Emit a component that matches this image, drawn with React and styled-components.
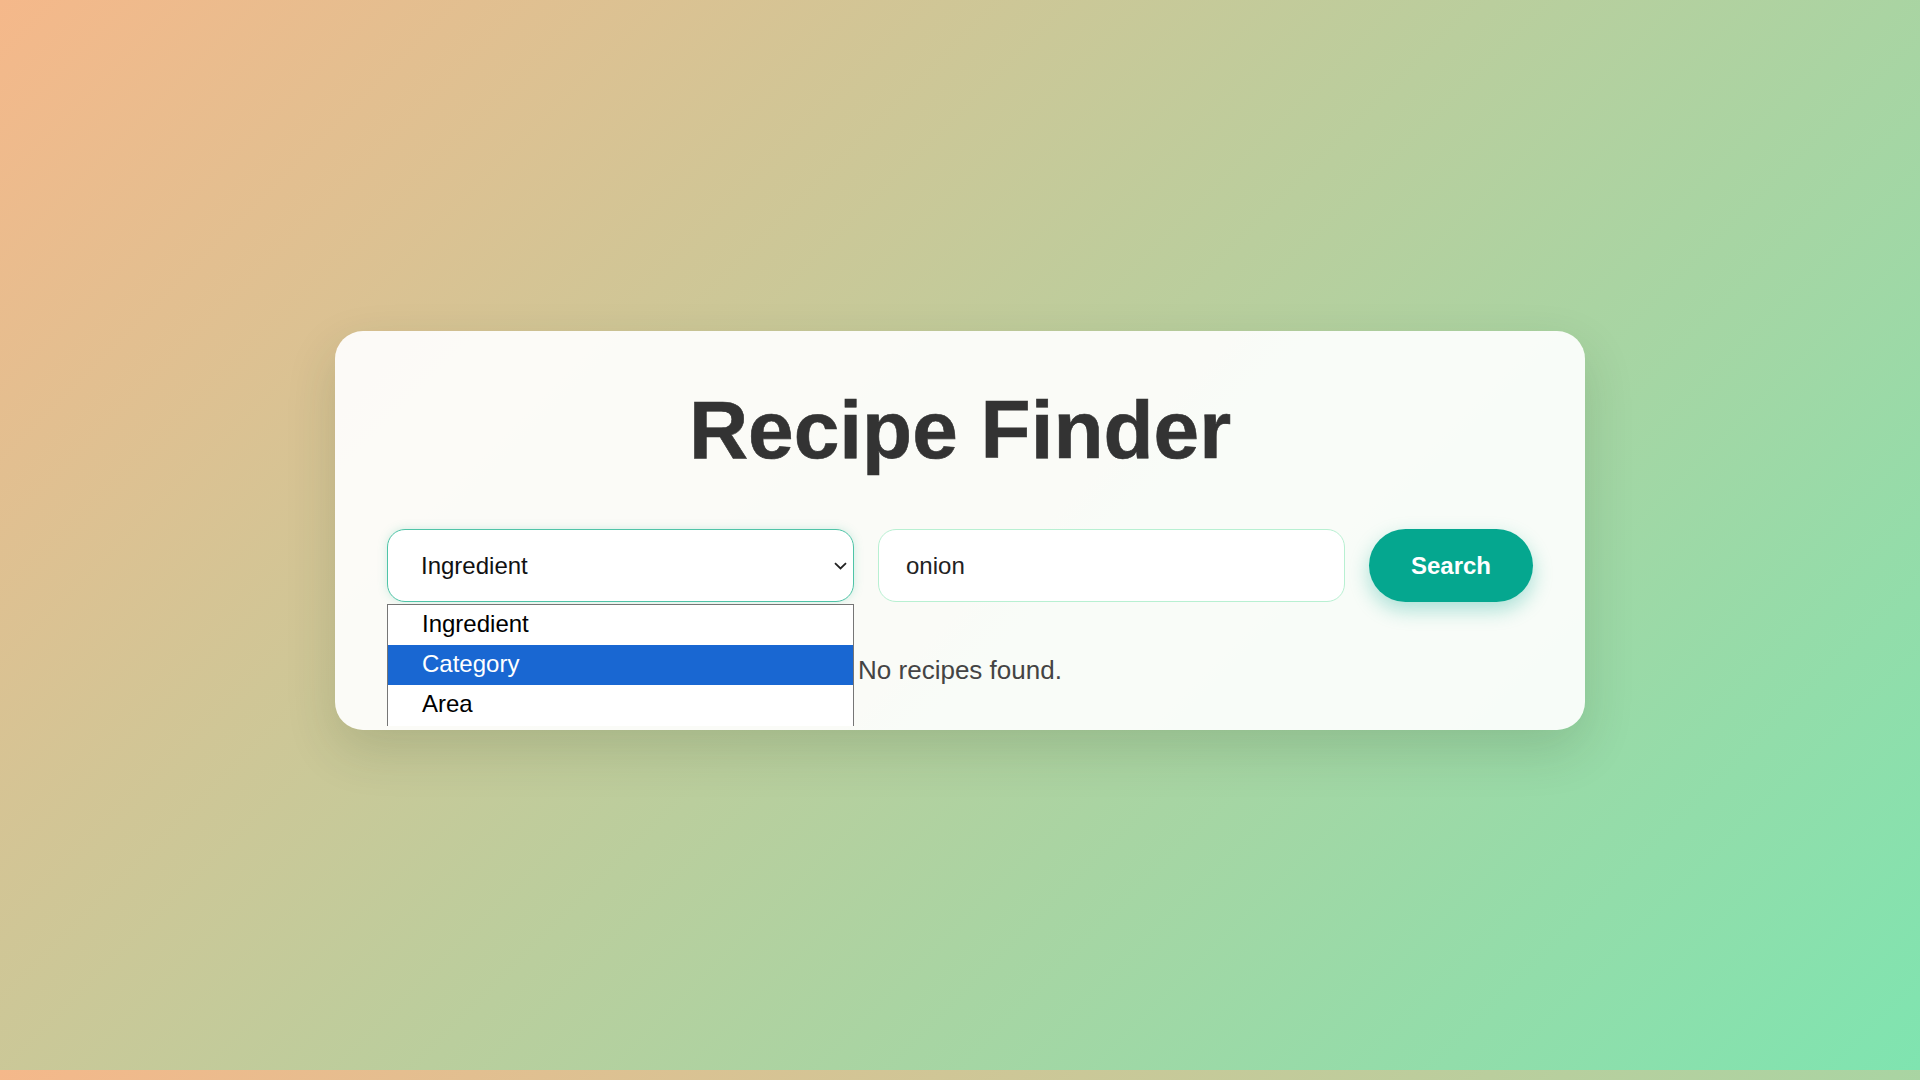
import React, { useState } from 'react';
import styled, { createGlobalStyle } from 'styled-components';

const GlobalStyle = createGlobalStyle`
  html {
    background: linear-gradient(135deg, #f5b88a 0%, #7fe4b0 100%);
    background-size: 100% 1070px;
    background-repeat: repeat-y;
    min-height: 100%;
  }
  body {
    margin: 0;
    font-family: "Liberation Sans", Arial, sans-serif;
  }
`;

const Page = styled.div`
  box-sizing: border-box;
  height: 1080px;
  padding-top: 331px;
  display: flex;
  justify-content: center;
  align-items: flex-start;
`;

const Card = styled.div`
  box-sizing: border-box;
  width: 1250px;
  padding: 52px 52px 44px;
  border-radius: 28px;
  background: rgba(255, 255, 255, 0.92);
  box-shadow: 0 20px 50px rgba(40, 60, 30, 0.16);
`;

const Title = styled.h1`
  margin: 0 0 52px;
  font-size: 82px;
  font-weight: 700;
  line-height: normal;
  color: #333;
  text-align: center;
  -webkit-text-stroke: 0.6px #333;
`;

const SearchRow = styled.div`
  display: grid;
  grid-template-columns: minmax(0, 1fr) minmax(0, 1fr) 164px;
  gap: 24px;
  height: 73px;
`;

const SelectWrap = styled.div`
  position: relative;
  min-width: 0;
`;

const Select = styled.select`
  box-sizing: border-box;
  width: 100%;
  height: 100%;
  appearance: none;
  border: 1.5px solid #4fc4a7;
  border-radius: 18px;
  background: #fff;
  padding: 0 40px 0 33px;
  font-family: inherit;
  font-size: 24px;
  color: #111;
  outline: none;
  box-shadow: 0 0 10px rgba(79, 196, 167, 0.25);
`;

const Chevron = styled.svg`
  position: absolute;
  right: 7px;
  top: 50%;
  margin-top: -4px;
  pointer-events: none;
`;

const OptionList = styled.ul`
  position: absolute;
  top: 75px;
  left: 0;
  right: 0;
  margin: 0;
  padding: 0;
  list-style: none;
  height: 121px;
  overflow: hidden;
  background: #fff;
  border: 1px solid #767676;
  border-bottom: none;
  z-index: 2;
`;

const Option = styled.li`
  height: 40px;
  line-height: 38px;
  padding-left: 34px;
  font-size: 24px;
  color: ${(p) => (p.$active ? '#fff' : '#000')};
  background: ${(p) => (p.$active ? '#1967d2' : 'transparent')};
`;

const TextInput = styled.input`
  box-sizing: border-box;
  width: 100%;
  min-width: 0;
  height: 100%;
  border: 1.5px solid #b8f0d2;
  border-radius: 18px;
  background: #fff;
  padding: 0 27px;
  font-family: inherit;
  font-size: 24px;
  color: #222;
  outline: none;
`;

const SearchButton = styled.button`
  height: 100%;
  border: none;
  border-radius: 999px;
  background: #05a78f;
  color: #fff;
  font-family: inherit;
  font-size: 24px;
  font-weight: 700;
  cursor: pointer;
  box-shadow: 0 8px 20px rgba(5, 167, 143, 0.32);
`;

const Message = styled.p`
  margin: 53px 0 0;
  font-size: 26px;
  line-height: normal;
  color: #444;
  text-align: center;
`;

const options = ['Ingredient', 'Category', 'Area'];

export default function App() {
  const [type, setType] = useState('Ingredient');
  const [query, setQuery] = useState('onion');

  return (
    <>
      <GlobalStyle />
      <Page>
        <Card>
          <Title>Recipe Finder</Title>
          <SearchRow>
            <SelectWrap>
              <Select value={type} onChange={(e) => setType(e.target.value)}>
                {options.map((o) => (
                  <option key={o} value={o}>{o}</option>
                ))}
              </Select>
              <Chevron width="13" height="8" viewBox="0 0 13 8">
                <path d="M1 1.2l5.5 5.3 5.5-5.3" fill="none" stroke="#222" strokeWidth="1.8" />
              </Chevron>
              <OptionList>
                {options.map((o) => (
                  <Option key={o} $active={o === 'Category'}>{o}</Option>
                ))}
              </OptionList>
            </SelectWrap>
            <TextInput value={query} onChange={(e) => setQuery(e.target.value)} />
            <SearchButton>Search</SearchButton>
          </SearchRow>
          <Message>No recipes found.</Message>
        </Card>
      </Page>
    </>
  );
}
